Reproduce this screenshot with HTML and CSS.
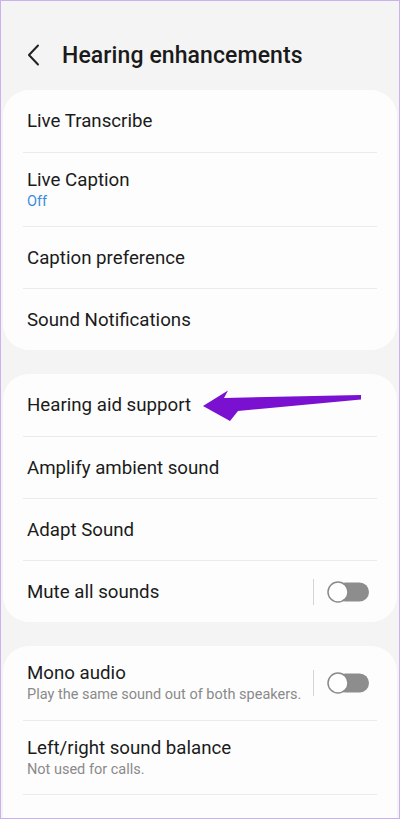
FILE: index.html
```html
<!DOCTYPE html>
<html>
<head>
<meta charset="utf-8">
<link rel="stylesheet" href="styles.css">
</head>
<body>
<div class="frame">
  <header class="header">
    <svg class="back" width="14" height="22" viewBox="0 0 14 22"><path d="M11 1.5 L2 11 L11 20.5" fill="none" stroke="#222" stroke-width="2" stroke-linecap="round" stroke-linejoin="round"/></svg>
    <h1 class="title">Hearing enhancements</h1>
  </header>

  <section class="card">
    <div class="row"><div class="label">Live Transcribe</div></div>
    <div class="row two"><div class="texts"><div class="label">Live Caption</div><div class="sub blue">Off</div></div></div>
    <div class="row"><div class="label">Caption preference</div></div>
    <div class="row"><div class="label">Sound Notifications</div></div>
  </section>

  <section class="card">
    <div class="row arrow-row"><div class="label">Hearing aid support</div>
      <svg class="arrow" width="170" height="34" viewBox="198 389 170 34"><polygon points="203,406 228,390.5 224,398 361,395 361,399.5 238,411 230,421" fill="#7a10d0"/></svg>
    </div>
    <div class="row"><div class="label">Amplify ambient sound</div></div>
    <div class="row"><div class="label">Adapt Sound</div></div>
    <div class="row"><div class="label grow">Mute all sounds</div>
      <span class="vdiv"></span>
      <svg class="toggle" width="44" height="24" viewBox="0 0 44 24"><rect x="10" y="2.5" width="33" height="19" rx="9.5" fill="#8d8d8d"/><circle cx="12" cy="12" r="10" fill="#fff" stroke="#8a8a8a" stroke-width="1.5"/></svg>
    </div>
  </section>

  <section class="card">
    <div class="row two"><div class="texts grow"><div class="label">Mono audio</div><div class="sub">Play the same sound out of both speakers.</div></div>
      <span class="vdiv"></span>
      <svg class="toggle" width="44" height="24" viewBox="0 0 44 24"><rect x="10" y="2.5" width="33" height="19" rx="9.5" fill="#8d8d8d"/><circle cx="12" cy="12" r="10" fill="#fff" stroke="#8a8a8a" stroke-width="1.5"/></svg>
    </div>
    <div class="row two"><div class="texts"><div class="label">Left/right sound balance</div><div class="sub">Not used for calls.</div></div></div>
    <div class="row"><div class="label">Customize sound quality</div></div>
  </section>
</div>
</body>
</html>
```

FILE: styles.css
```css
* { box-sizing: border-box; }
html, body { margin: 0; padding: 0; }
body {
  font-family: Roboto, "Noto Sans", sans-serif;
  color: #1b1b1b;
}
.frame {
  width: 400px;
  height: 819px;
  overflow: hidden;
  border: 1px solid #cfb0ee;
  background: #f4f4f4;
}
.header {
  display: flex;
  align-items: center;
  height: 40px;
  margin-top: 34px;
  margin-bottom: 15px;
  padding-left: 26px;
}
.back { flex: none; }
.title {
  margin: 0 0 0 21px;
  font-size: 23px;
  font-weight: 500;
  color: #1a1a1a;
  letter-spacing: 0.1px;
}
.card {
  background: #fdfdfd;
  margin: 0 2px 24px;
  border-radius: 26px;
  padding: 0;
}
.row {
  display: flex;
  align-items: center;
  height: 62px;
  margin: 0 20px;
  padding: 0 7px 0 4px;
  border-top: 1px solid #ebebeb;
}
.row:first-child { border-top: none; }
.row.two { height: 74px; }
.label {
  font-size: 18.7px;
  line-height: 24px;
  color: #1b1b1b;
}
.sub {
  font-size: 14.5px;
  line-height: 20px;
  color: #8a8a8a;
}
.sub.blue { color: #3b8de0; }
.grow { flex: 1; }
.vdiv {
  width: 1px;
  height: 26px;
  background: #d4d4d4;
  margin-right: 12px;
}
.toggle { flex: none; }
.arrow-row { position: relative; }
.arrow {
  position: absolute;
  left: 175px;
  top: 15px;
}
```
